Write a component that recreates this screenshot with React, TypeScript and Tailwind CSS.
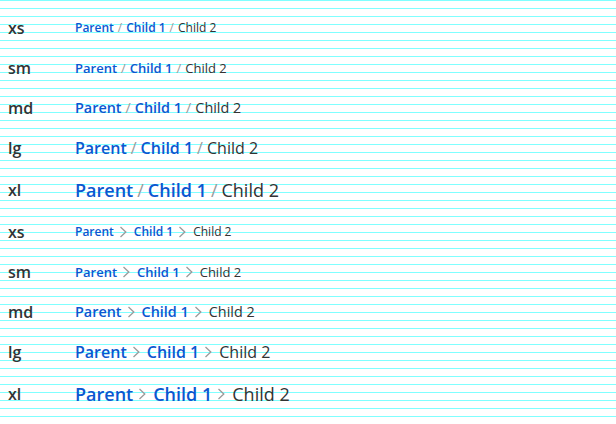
import React from 'react';

const sizes = [
  { label: 'xs', text: 'text-xs leading-4' },
  { label: 'sm', text: 'text-[13px] leading-4' },
  { label: 'md', text: 'text-[14.4px] leading-5' },
  { label: 'lg', text: 'text-base leading-6' },
  { label: 'xl', text: 'text-lg leading-7' },
];

function Chevron() {
  return (
    <svg viewBox="0 0 16 16" className="w-4 h-4 mx-0.5 shrink-0 text-[#9a9a9a]" fill="none" stroke="currentColor" strokeWidth="1.3">
      <path d="M4.5 3 L9.8 8 L4.5 13" />
    </svg>
  );
}

function Crumbs({ text, type }: { text: string; type: 'slash' | 'chevron' }) {
  const sep = type === 'slash'
    ? <span className="mx-1 text-[#9a9a9a]">/</span>
    : <Chevron />;
  return (
    <nav className={`flex items-center ${text}`}>
      <a className="font-semibold text-[#0b57d0]">Parent</a>
      {sep}
      <a className="font-semibold text-[#0b57d0]">Child 1</a>
      {sep}
      <span className="text-[#333]">Child 2</span>
    </nav>
  );
}

export default function App() {
  return (
    <div
      className="w-[616px] h-[424px] overflow-hidden bg-white pt-2 bg-[linear-gradient(to_bottom,#80ffff_1px,transparent_1px)] bg-[length:100%_8px]"
      style={{ fontFamily: '"Open Sans", sans-serif' }}
    >
      {(['slash', 'chevron'] as const).map((type) => (
        <div key={type}>
          {sizes.map((s) => (
            <div key={s.label} className="flex items-center py-2 px-2">
              <div className="w-[67px] text-base leading-6 font-semibold text-[#333]">{s.label}</div>
              <Crumbs text={s.text} type={type} />
            </div>
          ))}
        </div>
      ))}
    </div>
  );
}
